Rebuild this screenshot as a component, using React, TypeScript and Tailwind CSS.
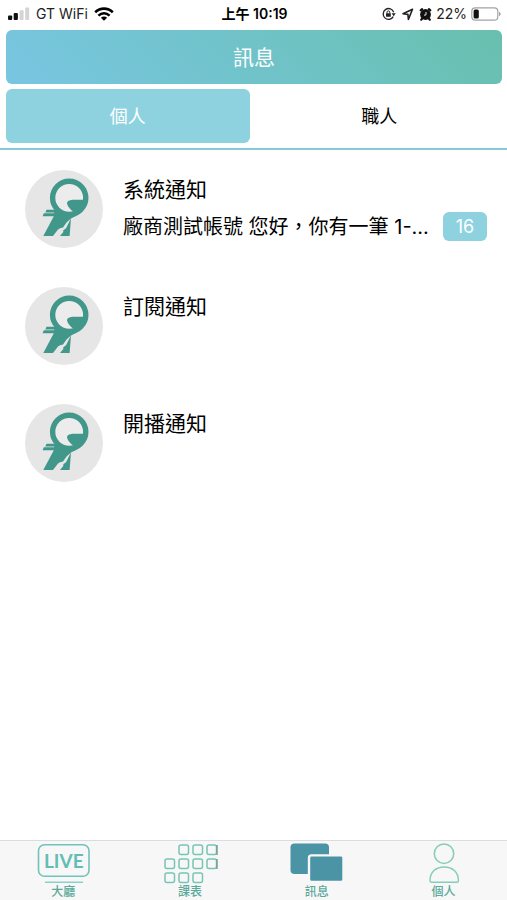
import clsx from 'clsx';

const tabs = [
  { id: 'personal', label: '個人', active: true },
  { id: 'artisan', label: '職人', active: false },
];

const messages = [
  { id: 'system', title: '系統通知', preview: '廠商測試帳號 您好，你有一筆 1-...', unread: 16 },
  { id: 'subscribe', title: '訂閱通知', preview: '', unread: 0 },
  { id: 'live', title: '開播通知', preview: '', unread: 0 },
];

function SignalIcon() {
  return (
    <svg width="22" height="14" viewBox="0 0 22 14" aria-hidden="true">
      <rect x="0" y="8.500" width="4.200" height="4.500" rx="1" fill="#111" />
      <rect x="5.700" y="6" width="4.200" height="7" rx="1" fill="#111" />
      <rect x="11.600" y="3.300" width="4" height="9.700" rx="1" fill="#d4d4d4" />
      <rect x="17.200" y=".5" width="4" height="12.500" rx="1" fill="#d4d4d4" />
    </svg>
  );
}

function WifiIcon() {
  return (
    <svg width="20" height="14" viewBox="0 0 20 14" fill="none" stroke="#000" strokeWidth="2.600" aria-hidden="true">
      <path d="M1.200 5.200C6.300 .4 13.700 .4 18.800 5.200" />
      <path d="M4.400 8.600c3.300-3 7.900-3 11.200 0" />
      <path d="M10 13.800 6.900 10.700c1.800-1.500 4.400-1.500 6.200 0z" fill="#000" stroke="none" />
    </svg>
  );
}

function StatusIcons() {
  return (
    <svg width="50" height="14" viewBox="0 0 50 14" aria-hidden="true">
      {/* rotation lock */}
      <path d="M11.300 9.600A5.400 5.400 0 1 1 11.700 5.200" fill="none" stroke="#222" strokeWidth="1.300" />
      <path d="M9.600 6.200h4.200L11.700 9.200z" fill="#222" />
      <rect x="4" y="6.300" width="4.800" height="3.500" rx=".5" fill="#222" />
      <path d="M5 6.500V5.300a1.400 1.400 0 0 1 2.800 0v1.200" fill="none" stroke="#222" />
      {/* location */}
      <path d="M30.500 2.200 21 6.700l4.900.7.500 5z" fill="none" stroke="#222" strokeWidth="1.600" strokeLinejoin="round" />
      {/* alarm */}
      <circle cx="43.500" cy="7.500" r="5.400" fill="#111" />
      <path d="m38.700 3.400 1.400-1.200M48.300 3.400l-1.400-1.200M40 11.800l-.8.900M47 11.800l.8.900" stroke="#111" strokeWidth="2.200" strokeLinecap="round" />
      <path d="M44 5v2.900l-2 .3" fill="none" stroke="#fff" strokeWidth=".9" />
    </svg>
  );
}

function BatteryIcon() {
  return (
    <svg width="30" height="14" viewBox="0 0 30 14" aria-hidden="true">
      <rect x=".8" y=".8" width="26" height="12.400" rx="3.500" fill="none" stroke="#a3a3a3" strokeWidth="1.200" />
      <rect x="2.600" y="2.600" width="5.200" height="8.800" rx="1.500" fill="#111" />
      <path d="M28 4.800c2.200.8 2.200 3.600 0 4.400z" fill="#a3a3a3" />
    </svg>
  );
}

function StatusBar() {
  return (
    <div className="grid h-[30px] grid-cols-[1fr_auto_1fr] items-center pr-1.5 pb-0.5 pl-2 text-sm text-[#222]">
      <div className="flex items-center gap-1.5">
        <SignalIcon />
        <span>GT WiFi</span>
        <WifiIcon />
      </div>
      <span className="font-semibold text-black">上午 10:19</span>
      <div className="flex items-center justify-end gap-1">
        <StatusIcons />
        <span>22%</span>
        <BatteryIcon />
      </div>
    </div>
  );
}

function Logo() {
  return (
    <svg className="size-[78px] shrink-0" viewBox="0 0 78 78" aria-hidden="true">
      <circle cx="39" cy="39" r="39" fill="#e6e6e6" />
      <circle cx="44.200" cy="27.800" r="16.600" fill="#ececec" stroke="#41988a" strokeWidth="5.400" />
      <g fill="#41988a">
        <path d="M61.500 29.800H47.500Q41.800 30.200 42 33.500Q43 37.500 48 41.500Q60 40 61.500 29.800Z" />
        <path d="M21.500 39.800H33V42.400H20.300zM18.800 43.300H32V46.300H17.600z" />
        <path d="M29.500 39.800L34 39.500L46 44.500L52 45.500L46 48.500L41.500 52.500L38 57.500L35 58.200L33 59.500L28 66H18.300L28.800 46.200Z" />
        <path d="M46 48.300L44.600 66H35L38.300 62V60.300L41 58.300Z" />
      </g>
    </svg>
  );
}

function LiveIcon() {
  return (
    <svg width="56" height="42" viewBox="0 0 56 42" aria-hidden="true">
      <rect x="3.500" y="2.700" width="50.500" height="31.500" rx="6" fill="none" stroke="#71c4bb" strokeWidth="1.600" />
      <text x="28.800" y="25.500" textAnchor="middle" fontSize="19" fontWeight="700" fill="#64bdb5" fontFamily="Lato, sans-serif">
        LIVE
      </text>
      <path d="M10 40.200h38" stroke="#8ed0c9" strokeWidth="1.600" />
    </svg>
  );
}

const gridCells = [[1, 2, 3], [0, 1, 2, 3], [0, 1, 2]];

function ScheduleIcon() {
  return (
    <svg width="56" height="42" viewBox="0 0 56 42" aria-hidden="true">
      {gridCells.map((cols, row) =>
        cols.map((col) => (
          <rect
            key={`${row}-${col}`}
            x={3 + col * 14}
            y={3 + row * 14}
            width="9.500"
            height="9.500"
            rx="2"
            fill="none"
            stroke="#78c5b6"
            strokeWidth="1.500"
          />
        ))
      )}
      <path d="M55 3v10M55 17v10" stroke="#78948d" strokeWidth="1.300" />
    </svg>
  );
}

function MessageIcon() {
  return (
    <svg width="56" height="42" viewBox="0 0 56 42" fill="#4a94a5" aria-hidden="true">
      <rect x="1.500" y="1.500" width="38.500" height="30.500" rx="4" />
      <rect x="20" y="13.400" width="34.500" height="26.500" rx="2.500" stroke="#f7f7f7" strokeWidth="2.400" />
    </svg>
  );
}

function PersonIcon() {
  return (
    <svg width="56" height="42" viewBox="0 0 56 42" fill="none" stroke="#86cdb9" strokeWidth="1.500" aria-hidden="true">
      <circle cx="28" cy="11.700" r="9.700" />
      <path d="M14 38.500c0-8.500 6-13.500 14.200-13.500s14.200 5 14.200 13.500q0 1.800-1.500 1.800H15.500Q14 40.300 14 38.500Z" />
    </svg>
  );
}

const navItems = [
  { id: 'lobby', label: '大廳', Icon: LiveIcon },
  { id: 'schedule', label: '課表', Icon: ScheduleIcon },
  { id: 'messages', label: '訊息', Icon: MessageIcon },
  { id: 'profile', label: '個人', Icon: PersonIcon },
];

export default function App() {
  return (
    <div className="flex min-h-screen flex-col bg-white font-[Inter,'Noto_Sans_CJK_TC',sans-serif] text-black">
      <StatusBar />
      <header className="mr-[5px] ml-1.5 flex h-[54px] items-center justify-center rounded-md bg-linear-45 from-[#78c6e2] to-[#69bfae]">
        <h1 className="pt-0.5 text-[21px] text-white">訊息</h1>
      </header>

      <div role="tablist" className="mt-[5px] grid grid-cols-2 gap-2 border-b-2 border-[#86cad8] px-1.5 pb-[5px]">
        {tabs.map((tab) => (
          <button
            key={tab.id}
            type="button"
            role="tab"
            aria-selected={tab.active}
            className={clsx(
              'h-[54px] rounded-md pt-0.5 text-lg',
              tab.active ? 'bg-[#8ed2e0] text-white' : 'text-black'
            )}
          >
            {tab.label}
          </button>
        ))}
      </div>

      <main className="flex-1">
        <ul>
          {messages.map((item) => (
            <li key={item.id}>
              <a href={`#${item.id}`} className="flex h-[117px] items-center gap-5 pr-5 pl-[25px]">
                <Logo />
                <div className="h-[78px] min-w-0 flex-1">
                  <h2 className="h-10 text-[21px] leading-10">{item.title}</h2>
                  {item.preview && (
                    <div className="flex items-center gap-2">
                      <p className="min-w-0 flex-1 truncate text-xl leading-[34px]">{item.preview}</p>
                      <span className="w-11 rounded-md bg-[#8ed2e0] text-center text-lg leading-[29px] text-white">
                        {item.unread}
                      </span>
                    </div>
                  )}
                </div>
              </a>
            </li>
          ))}
        </ul>
      </main>

      <nav className="grid grid-cols-4 border-t border-[#dcdcdc] bg-[#f7f7f7]">
        {navItems.map(({ id, label, Icon }) => (
          <a key={id} href={`#${id}`} className="flex h-[59px] flex-col items-center pt-px">
            <Icon />
            <span className="text-xs leading-4 font-medium text-[#5aa99a]">{label}</span>
          </a>
        ))}
      </nav>
    </div>
  );
}
